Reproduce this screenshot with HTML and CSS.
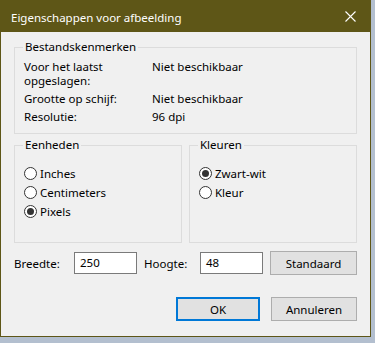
FILE: index.html
```html
<!DOCTYPE html>
<html lang="nl">

<head>
    <meta charset="UTF-8">
    <meta name="viewport" content="width=device-width, initial-scale=1.0">
    <title>Eigenschappen voor afbeelding</title>
    <link rel="stylesheet" href="styles.css">
</head>

<body>
    <div class="venster">
        <div class="titelbalk">
            <span class="titel">Eigenschappen voor afbeelding</span>
            <svg class="sluiten" width="11" height="11" viewBox="0 0 11 11">
                <path d="M0.5 0.5 L10.5 10.5 M10.5 0.5 L0.5 10.5" stroke="#fff" stroke-width="1.1" fill="none" />
            </svg>
        </div>

        <div class="inhoud">
            <fieldset class="groep kenmerken">
                <legend>Bestandskenmerken</legend>
                <div class="rij">
                    <span>Voor het laatst<br>opgeslagen:</span>
                    <span>Niet beschikbaar</span>
                </div>
                <div class="rij">
                    <span>Grootte op schijf:</span>
                    <span>Niet beschikbaar</span>
                </div>
                <div class="rij">
                    <span>Resolutie:</span>
                    <span>96 dpi</span>
                </div>
            </fieldset>

            <div class="groepen">
                <fieldset class="groep keuzes">
                    <legend>Eenheden</legend>
                    <label class="optie"><span class="rondje"></span>Inches</label>
                    <label class="optie"><span class="rondje"></span>Centimeters</label>
                    <label class="optie"><span class="rondje aan"></span>Pixels</label>
                </fieldset>
                <fieldset class="groep keuzes">
                    <legend>Kleuren</legend>
                    <label class="optie"><span class="rondje aan"></span>Zwart-wit</label>
                    <label class="optie"><span class="rondje"></span>Kleur</label>
                </fieldset>
            </div>

            <div class="maten">
                <span class="label-breedte">Breedte:</span>
                <div class="veld">250</div>
                <span class="label-hoogte">Hoogte:</span>
                <div class="veld">48</div>
                <button class="knop standaard">Standaard</button>
            </div>

            <div class="acties">
                <button class="knop ok">OK</button>
                <button class="knop">Annuleren</button>
            </div>
        </div>
    </div>
</body>

</html>
```

FILE: styles.css
```css
body {
    margin: 0;
    background: #b3bfcf;
    font-family: "Noto Sans", "Open Sans", sans-serif;
    font-size: 11.5px;
    color: #000;
}

.venster {
    width: 369px;
    border: 1px solid #5e5617;
    border-top: none;
    background: #f0f0f0;
}

.titelbalk {
    height: 32px;
    margin: 0 -1px;
    padding: 0 0 0 11px;
    display: flex;
    align-items: center;
    justify-content: space-between;
    background: #5e5617;
    color: #fff;
}

.titel {
    padding-top: 3px;
}

.sluiten {
    margin-right: 15px;
}

.inhoud {
    padding: 7px 13px 15px;
}

.groep {
    margin: 0;
    padding: 0 9px;
    border: 1px solid #dcdcdc;
    min-width: 0;
}

.groep legend {
    padding: 0 2px;
    margin-left: -1px;
    line-height: 16px;
}

.kenmerken {
    padding-top: 5px;
    padding-bottom: 9px;
}

.rij {
    display: grid;
    grid-template-columns: 128px auto;
    line-height: 14px;
    margin-bottom: 4px;
}

.rij:last-child {
    margin-bottom: 0;
}

.groepen {
    margin-top: 3px;
    display: flex;
    gap: 7px;
}

.keuzes {
    flex: 1;
    height: 93px;
    padding-top: 11px;
}

.optie {
    display: flex;
    align-items: center;
    height: 19px;
    gap: 3px;
}

.rondje {
    box-sizing: border-box;
    width: 13px;
    height: 13px;
    border: 1px solid #333;
    border-radius: 50%;
    background: #fff;
    position: relative;
}

.rondje.aan::after {
    content: "";
    position: absolute;
    left: 2px;
    top: 2px;
    width: 7px;
    height: 7px;
    border-radius: 50%;
    background: #333;
}

.maten {
    margin-top: 8px;
    display: flex;
    align-items: center;
}

.label-breedte {
    width: 60px;
}

.label-hoogte {
    width: 56px;
}

.veld {
    box-sizing: border-box;
    width: 63px;
    height: 22px;
    padding: 3px 5px;
    border: 1px solid #7a7a7a;
    background: #fff;
    line-height: 14px;
    margin-right: 7px;
}

.knop {
    box-sizing: border-box;
    height: 24px;
    width: 86px;
    border: 1px solid #adadad;
    background: #e1e1e1;
    font: inherit;
    color: #000;
    padding: 0;
}

.standaard {
    width: 87px;
}

.acties {
    margin-top: 22px;
    display: flex;
    justify-content: flex-end;
    gap: 11px;
}

.ok {
    width: 84px;
    border: 2px solid #0078d7;
}
```
